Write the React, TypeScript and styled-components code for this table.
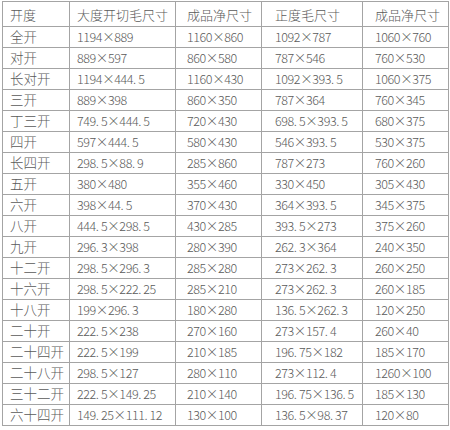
import React from 'react';
import styled, { createGlobalStyle } from 'styled-components';

const GlobalStyle = createGlobalStyle`
    html, body {
        margin: 0;
        padding: 0;
        background: #ffffff;
    }
`;

const Page = styled.div`
    width: 450px;
    height: 430px;
    padding: 1px 0 0 2px;
    box-sizing: border-box;
    background: #ffffff;
`;

const Table = styled.table`
    border-collapse: collapse;
    table-layout: fixed;
    width: 446px;
    font-family: "Noto Sans CJK SC", "Noto Sans", sans-serif;
    font-weight: 300;
    color: #5a5a5a;
`;

const Col = styled.col<{ $w: number }>`
    width: ${(p) => p.$w}px;
`;

const HeadRow = styled.tr`
    height: 25px;
`;

const Row = styled.tr`
    height: 21px;
`;

const HeadCell = styled.th<{ $pad: number }>`
    border: 1.5px solid #a4a4a4;
    padding: 0 0 0 ${(p) => p.$pad}px;
    text-align: left;
    font-size: 13px;
    font-weight: 300;
    line-height: 1;
    white-space: nowrap;
`;

const Cell = styled.td<{ $name?: boolean; $pad: number }>`
    border: 1.5px solid #a4a4a4;
    padding: 0 0 0 ${(p) => p.$pad}px;
    font-size: ${(p) => (p.$name ? 13.5 : 12.5)}px;
    line-height: 1;
    white-space: nowrap;
    letter-spacing: ${(p) => (p.$name ? 0 : -0.4)}px;
`;

const headers = ['开度', '大度开切毛尺寸', '成品净尺寸', '正度毛尺寸', '成品净尺寸'];
const widths = [67, 106, 86, 101, 86];
const pads = [7, 7, 11, 13, 12];

const rows: string[][] = [
    ['全开', '1194×889', '1160×860', '1092×787', '1060×760'],
    ['对开', '889×597', '860×580', '787×546', '760×530'],
    ['长对开', '1194×444. 5', '1160×430', '1092×393. 5', '1060×375'],
    ['三开', '889×398', '860×350', '787×364', '760×345'],
    ['丁三开', '749. 5×444. 5', '720×430', '698. 5×393. 5', '680×375'],
    ['四开', '597×444. 5', '580×430', '546×393. 5', '530×375'],
    ['长四开', '298. 5×88. 9', '285×860', '787×273', '760×260'],
    ['五开', '380×480', '355×460', '330×450', '305×430'],
    ['六开', '398×44. 5', '370×430', '364×393. 5', '345×375'],
    ['八开', '444. 5×298. 5', '430×285', '393. 5×273', '375×260'],
    ['九开', '296. 3×398', '280×390', '262. 3×364', '240×350'],
    ['十二开', '298. 5×296. 3', '285×280', '273×262. 3', '260×250'],
    ['十六开', '298. 5×222. 25', '285×210', '273×262. 3', '260×185'],
    ['十八开', '199×296. 3', '180×280', '136. 5×262. 3', '120×250'],
    ['二十开', '222. 5×238', '270×160', '273×157. 4', '260×40'],
    ['二十四开', '222. 5×199', '210×185', '196. 75×182', '185×170'],
    ['二十八开', '298. 5×127', '280×110', '273×112. 4', '1260×100'],
    ['三十二开', '222. 5×149. 25', '210×140', '196. 75×136. 5', '185×130'],
    ['六十四开', '149. 25×111. 12', '130×100', '136. 5×98. 37', '120×80'],
];

export default class App extends React.Component<{}, {}> {
    render() {
        return (
            <Page>
                <GlobalStyle />
                <Table>
                    <colgroup>
                        {widths.map((w, i) => (
                            <Col key={i} $w={w} />
                        ))}
                    </colgroup>
                    <thead>
                        <HeadRow>
                            {headers.map((h, i) => (
                                <HeadCell key={i} $pad={pads[i]}>
                                    {h}
                                </HeadCell>
                            ))}
                        </HeadRow>
                    </thead>
                    <tbody>
                        {rows.map((r, i) => (
                            <Row key={i}>
                                {r.map((c, j) => (
                                    <Cell key={j} $name={j === 0} $pad={pads[j]}>
                                        {c}
                                    </Cell>
                                ))}
                            </Row>
                        ))}
                    </tbody>
                </Table>
            </Page>
        );
    }
}
